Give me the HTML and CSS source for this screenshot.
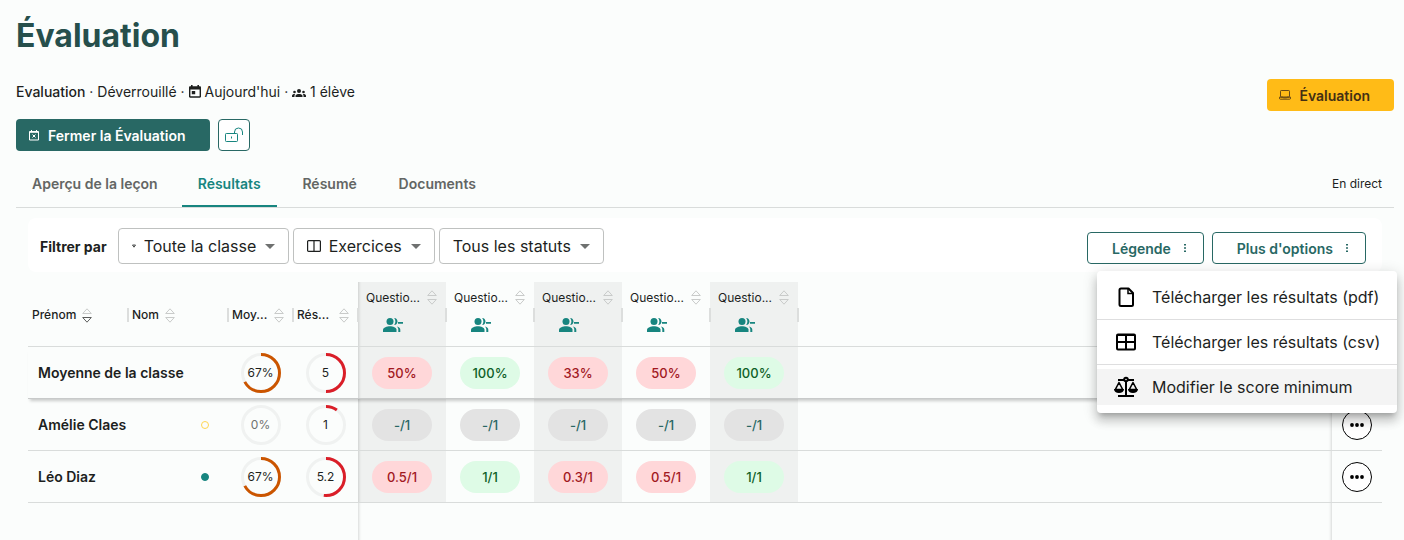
FILE: index.html
```
<!DOCTYPE html>
<html lang="fr">
    <head>
        <meta charset="utf-8">
        <meta name="viewport" content="width=device-width, initial-scale=1.0">
        <title>Évaluation</title>
        <link rel="stylesheet" href="styles.css">
    </head>
    <body>
        <!-- shared icons -->
        <svg class="sprite" aria-hidden="true">
            <symbol id="sort" viewBox="0 0 10 15">
                <path d="M.7 5.500 5 .8l4.300 4.700z"/>
                <path class="down" d="M.7 9.500 5 14.200l4.300-4.700z"/>
            </symbol>
            <symbol id="people" viewBox="0 0 20 14">
                <circle cx="7" cy="3.500" r="3.500"/>
                <path d="M0 14v-2.200C0 9.400 4 8.200 7 8.200s6.500 1.200 6.500 3.600V14z"/>
                <path d="M11.200 0c2 .1 3.300 1.600 3.300 3.500S13.200 6.900 11.200 7c.8-1 1.200-2.200 1.200-3.500S12 1 11.200 0zM14 8.600c2 .6 3.300 1.600 3.300 3.200V14h-2v-2.200c0-1.300-.5-2.400-1.300-3.200zM15 4h5v1.800h-5z"/>
            </symbol>
            <symbol id="dots" viewBox="0 0 4 10">
                <path d="M1 1h2v1.600H1zM1 4.200h2v1.600H1zM1 7.400h2V9H1z"/>
            </symbol>
            <symbol id="more" viewBox="0 0 14 4">
                <circle cx="2" cy="2" r="1.900"/><circle cx="7" cy="2" r="1.900"/><circle cx="12" cy="2" r="1.900"/>
            </symbol>
        </svg>

        <header>
            <h1>Évaluation</h1>
            <div class="infos">
                <p>
                    <strong>Evaluation</strong> · Déverrouillé ·
                    <svg class="icon-day" viewBox="0 0 12 13"><path fill-rule="evenodd" d="M2 0h1.600v1.300h4.800V0H10v1.300h.8c.7 0 1.200.5 1.200 1.200v9c0 .7-.5 1.200-1.200 1.200H1.200C.5 12.700 0 12.200 0 11.500v-9c0-.7.5-1.200 1.200-1.200H2zM1.400 4.500v6.800h9.200V4.500zM2.800 6h3.400v3.300H2.800z"/></svg>
                    Aujourd'hui ·
                    <svg class="icon-group" viewBox="0 0 14 8"><circle cx="7" cy="2" r="2"/><circle cx="2.500" cy="3" r="1.300"/><circle cx="11.500" cy="3" r="1.300"/><path d="M3.500 8V6.800C3.500 5.500 5.500 5 7 5s3.500.5 3.500 1.800V8zM0 8V6.800C0 5.600 1.200 5 3.300 5.100c-.5.400-.8 1-.8 1.700V8zM14 8V6.800c0-1.200-1.200-1.800-3.300-1.700.5.400.8 1 .8 1.700V8z"/></svg>
                    1 élève
                </p>
                <button type="button" class="btn btn-amber">
                    <svg viewBox="0 0 12 12" fill="none" stroke="currentColor" stroke-width=".8"><rect x="1.500" y="1.500" width="9" height="6.500" rx=".8"/><path d="M.4 8.200h3.400l.5.600h3.400l.5-.6h3.400v1c0 .6-.4 1-1 1H1.400c-.6 0-1-.4-1-1z"/></svg>
                    Évaluation
                </button>
            </div>
            <div class="actions">
                <button type="button" class="btn btn-teal">
                    <svg viewBox="0 0 12 12" fill="none" stroke="currentColor"><path d="M1.500 2.500h9v8.500h-9zM1.500 3.300h9M3.500 1v2M8.500 1v2"/><path d="M4.500 5.500l3 3M7.500 5.500l-3 3"/></svg>
                    Fermer la Évaluation
                </button>
                <button type="button" class="btn btn-lock" aria-label="Verrouiller">
                    <svg viewBox="0 0 18 16" fill="none" stroke="currentColor"><rect x=".5" y="6.500" width="12" height="8" rx=".8"/><path d="M9.500 6.500V5a4 4 0 0 1 8 0v3M6.500 9.500v2"/></svg>
                </button>
            </div>
        </header>

        <nav>
            <a href="#apercu">Aperçu de la leçon</a>
            <a href="#resultats" class="active">Résultats</a>
            <a href="#resume">Résumé</a>
            <a href="#documents">Documents</a>
            <span class="live">En direct</span>
        </nav>

        <main>
            <div class="filters">
                <span class="filters-title">Filtrer par</span>
                <label class="select">
                    <svg class="icon-tiny" viewBox="0 0 4 4" fill="none" stroke="currentColor" stroke-width=".8"><path d="M.5 1h3L2 3.200z"/></svg>
                    <select aria-label="Classe"><option>Toute la classe</option></select>
                </label>
                <label class="select">
                    <svg class="icon-cols" viewBox="0 0 14 12" fill="none" stroke="currentColor" stroke-width="1.200"><rect x=".6" y=".6" width="12.800" height="10.800" rx="1"/><path d="M7 .6v10.800"/></svg>
                    <select aria-label="Exercices"><option>Exercices</option></select>
                </label>
                <label class="select">
                    <select aria-label="Statut"><option>Tous les statuts</option></select>
                </label>
                <div class="options">
                    <button type="button" class="btn btn-line">Légende <svg><use href="#dots"/></svg></button>
                    <div class="dropdown">
                        <button type="button" class="btn btn-line" aria-expanded="true">Plus d'options <svg><use href="#dots"/></svg></button>
                        <ul class="menu">
                            <li><button type="button">
                                <svg viewBox="0 0 26 24" fill="none" stroke="currentColor" stroke-width="2"><path d="M15.500 3.500H8c-.8 0-1.500.7-1.500 1.500v14.500c0 .8.700 1.500 1.500 1.500h10.500c.8 0 1.500-.7 1.500-1.500V8z" stroke-linejoin="round"/><path d="M15 3.500V8.500h5" stroke-width="1.500"/></svg>
                                Télécharger les résultats (pdf)
                            </button></li>
                            <li><button type="button">
                                <svg viewBox="0 0 26 24" fill="none" stroke="currentColor" stroke-width="2"><rect x="4" y="4.500" width="18" height="15" rx="1"/><path d="M4 5h18M4 12h18M13 5v14.500"/></svg>
                                Télécharger les résultats (csv)
                            </button></li>
                            <li><button type="button" class="hover">
                                <svg viewBox="0 0 26 24" fill="none" stroke="currentColor" stroke-width="2"><circle cx="13" cy="4.500" r="1.800"/><path d="M5 5h6M15 5h6M13 6.500V21M5 21h16"/><path d="M6 7.500 2.300 14.500h7.400zM20 7.500l-3.700 7h7.400z" stroke-width="1.600" stroke-linejoin="round"/><path d="M1 14h10c0 2.500-2.200 4-5 4s-5-1.500-5-4zM15 14h10c0 2.500-2.200 4-5 4s-5-1.500-5-4z" fill="currentColor" stroke="none"/></svg>
                                Modifier le score minimum
                            </button></li>
                        </ul>
                    </div>
                </div>
            </div>

            <table>
                <colgroup>
                    <col class="c-name"><col class="c-name"><col class="c-score"><col class="c-score">
                    <col class="c-q"><col class="c-q"><col class="c-q"><col class="c-q"><col class="c-q">
                    <col><col class="c-more">
                </colgroup>
                <thead>
                    <tr>
                        <th><div class="head">Prénom <svg class="sort sorted"><use href="#sort"/></svg></div></th>
                        <th><div class="head">Nom <svg class="sort"><use href="#sort"/></svg></div></th>
                        <th><div class="head spread">Moy... <svg class="sort"><use href="#sort"/></svg></div></th>
                        <th><div class="head spread">Rés... <svg class="sort"><use href="#sort"/></svg></div></th>
                        <th class="q odd edge"><div class="head"><span>Questio...<svg class="people"><use href="#people"/></svg></span><svg class="sort"><use href="#sort"/></svg></div></th>
                        <th class="q"><div class="head"><span>Questio...<svg class="people"><use href="#people"/></svg></span><svg class="sort"><use href="#sort"/></svg></div></th>
                        <th class="q odd"><div class="head"><span>Questio...<svg class="people"><use href="#people"/></svg></span><svg class="sort"><use href="#sort"/></svg></div></th>
                        <th class="q"><div class="head"><span>Questio...<svg class="people"><use href="#people"/></svg></span><svg class="sort"><use href="#sort"/></svg></div></th>
                        <th class="q odd"><div class="head"><span>Questio...<svg class="people"><use href="#people"/></svg></span><svg class="sort"><use href="#sort"/></svg></div></th>
                        <td class="edge-end"></td>
                        <td></td>
                    </tr>
                </thead>
                <tbody>
                    <tr class="average">
                        <th colspan="2" scope="row"><div class="name">Moyenne de la classe</div></th>
                        <td><div class="ring orange"><svg viewBox="0 0 40 40"><circle cx="20" cy="20" r="18.500"/><circle class="arc" cx="20" cy="20" r="18.500" pathLength="100" stroke-dasharray="67 100"/></svg>67%</div></td>
                        <td><div class="ring red"><svg viewBox="0 0 40 40"><circle cx="20" cy="20" r="18.500"/><circle class="arc" cx="20" cy="20" r="18.500" pathLength="100" stroke-dasharray="50 100"/></svg>5</div></td>
                        <td class="odd edge"><span class="pill bad">50%</span></td>
                        <td><span class="pill good">100%</span></td>
                        <td class="odd"><span class="pill bad">33%</span></td>
                        <td><span class="pill bad">50%</span></td>
                        <td class="odd"><span class="pill good">100%</span></td>
                        <td class="edge-end"></td>
                        <td></td>
                    </tr>
                    <tr>
                        <th colspan="2" scope="row"><div class="name">Amélie Claes <i class="status"></i></div></th>
                        <td><div class="ring muted"><svg viewBox="0 0 40 40"><circle cx="20" cy="20" r="18.500"/></svg>0%</div></td>
                        <td><div class="ring red"><svg viewBox="0 0 40 40"><circle cx="20" cy="20" r="18.500"/><circle class="arc" cx="20" cy="20" r="18.500" pathLength="100" stroke-dasharray="10 100"/></svg>1</div></td>
                        <td class="odd edge"><span class="pill">-/1</span></td>
                        <td><span class="pill">-/1</span></td>
                        <td class="odd"><span class="pill">-/1</span></td>
                        <td><span class="pill">-/1</span></td>
                        <td class="odd"><span class="pill">-/1</span></td>
                        <td class="edge-end"></td>
                        <td><button type="button" class="more" aria-label="Options"><svg><use href="#more"/></svg></button></td>
                    </tr>
                    <tr>
                        <th colspan="2" scope="row"><div class="name">Léo Diaz <i class="status online"></i></div></th>
                        <td><div class="ring orange"><svg viewBox="0 0 40 40"><circle cx="20" cy="20" r="18.500"/><circle class="arc" cx="20" cy="20" r="18.500" pathLength="100" stroke-dasharray="67 100"/></svg>67%</div></td>
                        <td><div class="ring red"><svg viewBox="0 0 40 40"><circle cx="20" cy="20" r="18.500"/><circle class="arc" cx="20" cy="20" r="18.500" pathLength="100" stroke-dasharray="52 100"/></svg>5.2</div></td>
                        <td class="odd edge"><span class="pill bad">0.5/1</span></td>
                        <td><span class="pill good">1/1</span></td>
                        <td class="odd"><span class="pill bad">0.3/1</span></td>
                        <td><span class="pill bad">0.5/1</span></td>
                        <td class="odd"><span class="pill good">1/1</span></td>
                        <td class="edge-end"></td>
                        <td><button type="button" class="more" aria-label="Options"><svg><use href="#more"/></svg></button></td>
                    </tr>
                </tbody>
            </table>
            <!-- keeps the pinned column edges going below the last row -->
            <div class="rest"></div>
        </main>
    </body>
</html>
```

FILE: styles.css
```
* {
    box-sizing: border-box;
    margin: 0;
    padding: 0;
}
body {
    display: flex;
    flex-direction: column;
    min-height: 100vh;
    padding: 12px 10px 0 16px;
    background-color: #fbfdfc;
    color: #1d1f1e;
    font: 14px/20px Inter, sans-serif;
}
button, select {
    font: inherit;
    color: inherit;
    cursor: pointer;
}
svg {
    flex: none;
    fill: currentColor;
}
svg[fill="none"] {
    fill: none;
}
.sprite {
    display: none;
}

/* header */
h1 {
    color: #264f4c;
    font-size: 32px;
    line-height: 48px;
    font-weight: 700;
}
.infos {
    display: flex;
    justify-content: space-between;
    align-items: center;
    margin-top: 19px;
}
.infos p {
    height: 20px;
    margin-bottom: 6px;
}
.infos strong {
    font-weight: 500;
}
.icon-day {
    width: 12px;
    height: 13px;
    vertical-align: -1px;
}
.icon-group {
    width: 14px;
    height: 8px;
}
.btn {
    display: flex;
    align-items: center;
    height: 32px;
    gap: 8px;
    border: none;
    border-radius: 4px;
    padding: 2px 24px 0 12px;
    font-weight: 600;
    white-space: nowrap;
}
.btn svg {
    width: 12px;
    height: 12px;
    margin-bottom: 2px;
}
.btn-amber {
    background-color: #ffbb17;
    color: #442f14;
}
.btn-teal {
    background-color: #286864;
    color: #fff;
}
.actions {
    display: flex;
    gap: 8px;
    margin-top: 8px;
}
.btn-lock {
    justify-content: center;
    width: 32px;
    padding: 0;
    border: 1px solid #286864;
    background-color: #fff;
    color: #17857f;
}
.btn-lock svg {
    width: 18px;
    height: 16px;
    margin: 0;
}

/* tabs */
nav {
    display: flex;
    gap: 8px;
    margin-top: 10px;
    border-bottom: 1px solid #d9dcdb;
}
nav a {
    min-width: 90px;
    height: 46px;
    padding: 0 16px;
    border-bottom: 2px solid transparent;
    color: #636664;
    font-weight: 600;
    line-height: 46px;
    text-align: center;
    text-decoration: none;
}
nav .active {
    border-color: #17857f;
    color: #17857f;
}
.live {
    margin-left: auto;
    padding-right: 12px;
    font-size: 12px;
    line-height: 46px;
}

/* filters */
main {
    display: flex;
    flex-direction: column;
    flex: 1;
    padding: 10px 12px 0;
}
.filters {
    display: flex;
    align-items: center;
    gap: 4px;
    height: 54px;
    padding: 2px 16px 0 12px;
    border-radius: 8px;
    background-color: #fff;
}
.filters-title {
    margin-right: 7px;
    padding-top: 2px;
    font-weight: 700;
}
.select {
    display: flex;
    align-items: center;
    gap: 8px;
    height: 36px;
    padding: 0 13px;
    border: 1px solid #bfc1c0;
    border-radius: 4px;
}
.select select {
    appearance: none;
    border: none;
    background: none;
    font-size: 16px;
    line-height: 24px;
}
.select::after { /* caret */
    content: "";
    border: 5px solid transparent;
    border-top-color: #6f7170;
    border-bottom: none;
}
.icon-tiny {
    width: 4px;
    height: 4px;
}
.icon-cols {
    width: 14px;
    height: 12px;
}
.options {
    display: flex;
    gap: 8px;
    margin-left: auto;
    padding-top: 4px;
}
.btn-line {
    gap: 12px;
    padding: 2px 16px 0 24px;
    border: 1px solid #286864;
    background-color: #fff;
    color: #286864;
}
.btn-line svg {
    width: 4px;
    height: 10px;
}

/* menu */
.dropdown {
    position: relative;
}
.menu {
    position: absolute;
    z-index: 5;
    top: 39px;
    right: -31px;
    width: 300px;
    padding: 8px 0;
    border-radius: 4px;
    background-color: #fff;
    box-shadow: 0 5px 5px -3px rgba(0, 0, 0, .2), 0 8px 10px 1px rgba(0, 0, 0, .14), 0 3px 14px 2px rgba(0, 0, 0, .12);
    list-style: none;
}
.menu li + li {
    margin-top: 4px;
    padding-top: 4px;
    border-top: 1px solid #dededf;
}
.menu button {
    display: flex;
    align-items: center;
    gap: 13px;
    width: 100%;
    height: 36px;
    padding: 0 16px;
    border: none;
    background: none;
    font-size: 16px;
    white-space: nowrap;
}
.menu .hover {
    background-color: #f4f4f4;
}
.menu svg {
    width: 26px;
    height: 24px;
    color: #000;
}

/* results table */
table {
    width: 100%;
    margin-top: 10px;
    table-layout: fixed;
    border-collapse: separate;
    border-spacing: 0;
}
.c-name { width: 100px; }
.c-score { width: 65px; }
.c-q { width: 88px; }
.c-more { width: 50px; }
th, td {
    height: 52px;
    border-bottom: 1px solid #d9dcdb;
    text-align: left;
}
thead th, thead td {
    position: relative;
    height: 65px;
    padding: 2px 4px 0;
    font-size: 12px;
    line-height: 16px;
    font-weight: 500;
}
thead th::after { /* resize handle */
    content: "";
    position: absolute;
    z-index: 1;
    top: 26px;
    right: -1px;
    width: 2px;
    height: 14px;
    background-color: #dcdedd;
}
.odd {
    background-color: #eff1f0;
}
.edge {
    box-shadow: inset 4px 0 3px -3px rgba(0, 0, 0, .15);
}
.edge-end {
    box-shadow: inset -4px 0 3px -3px rgba(0, 0, 0, .15);
}
.head {
    display: flex;
    align-items: center;
    gap: 6px;
}
.spread {
    justify-content: space-between;
    padding-right: 5px;
}
thead .q {
    padding: 8px 8px 0 7px;
    font-weight: 400;
    vertical-align: top;
}
.q .head {
    align-items: flex-start;
}
.q span {
    width: 56px;
    text-align: center;
}
.sort {
    width: 10px;
    height: 15px;
    fill: none;
    stroke: #c9cbca;
    color: #c9cbca;
}
.down {
    stroke: currentColor;
}
.sorted {
    color: #5c5e5d;
}
.people {
    display: block;
    width: 20px;
    height: 14px;
    margin: 12px auto 0;
    color: #17857f;
}
.average {
    position: relative;
    z-index: 1;
    box-shadow: 0 4px 3px -2px rgba(0, 0, 0, .2);
}
.average th, .average td {
    border-color: #c8caca;
}
.name {
    display: flex;
    justify-content: space-between;
    align-items: center;
    padding: 0 19px 0 10px;
    font-weight: 600;
}
.status {
    width: 8px;
    height: 8px;
    border: 1px solid #ffd652;
    border-radius: 50%;
}
.online {
    border-color: #17857f;
    background-color: #17857f;
}
.ring {
    display: flex;
    justify-content: center;
    align-items: center;
    position: relative;
    font-size: 12px;
    line-height: 40px;
}
.ring svg { /* drawn around the number */
    position: absolute;
    width: 40px;
    height: 40px;
    transform: rotate(-90deg);
}
.ring circle {
    fill: none;
    stroke: #f0f2f1;
    stroke-width: 3;
}
.ring .arc { stroke: #da1e28; }
.orange .arc { stroke: #cb5500; }
.muted { color: #6f7170; }
.pill {
    display: block;
    width: 60px;
    height: 32px;
    margin: 0 auto;
    border-radius: 16px;
    background-color: #e3e3e3;
    color: #286864;
    font-size: 13px;
    font-weight: 500;
    line-height: 32px;
    text-align: center;
}
.good {
    background-color: #defbe6;
    color: #0e6027;
}
.bad {
    background-color: #ffd7d9;
    color: #a2191f;
}
.more {
    display: grid;
    place-items: center;
    width: 30px;
    height: 30px;
    margin: 0 auto;
    border: 1px solid #000;
    border-radius: 50%;
    background-color: #fff;
    color: #000;
}
.more svg {
    width: 14px;
    height: 4px;
}
.rest {
    flex: 1;
    margin: 0 50px 0 330px;
    box-shadow: inset 4px 0 3px -3px rgba(0, 0, 0, .15), inset -4px 0 3px -3px rgba(0, 0, 0, .15);
}
```
